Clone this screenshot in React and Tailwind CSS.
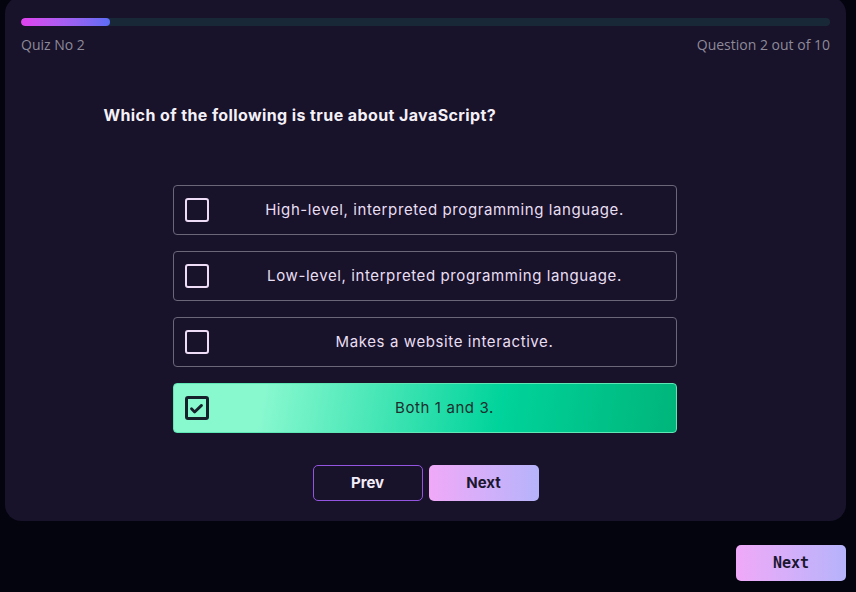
import React, { useState } from "react";

const OPTIONS = [
  "High-level, interpreted programming language.",
  "Low-level, interpreted programming language.",
  "Makes a website interactive.",
  "Both 1 and 3.",
];

const Checkbox = ({ checked }) => (
  <span
    className={
      checked
        ? "w-6 h-6 shrink-0 rounded-[3px] border-[3px] border-[#16202a] flex items-center justify-center"
        : "w-6 h-6 shrink-0 rounded-[3px] border-2 border-[#eedcf7]"
    }
  >
    {checked && (
      <svg width="15" height="15" viewBox="0 0 24 24" fill="none" stroke="#16202a" strokeWidth="4.5" strokeLinecap="round" strokeLinejoin="round">
        <path d="M4 12.5l5 5L20 7" />
      </svg>
    )}
  </span>
);

export default function App() {
  const [selected, setSelected] = useState(3);

  return (
    <div className="min-h-[592px] w-full bg-[#04040f] flex flex-col pl-[5px] pr-[10px] pb-3 font-['Inter',sans-serif]">
      {/* Quiz card */}
      <div className="-mt-[3px] bg-[#18122a] rounded-2xl px-4 pt-[21px] pb-5">
        <div className="h-2 w-full rounded-full bg-[#192837] overflow-hidden">
          <div className="h-full w-[11%] rounded-full bg-gradient-to-r from-[#e040ef] to-[#5b6cf5]" />
        </div>
        <div className="mt-[8px] flex justify-between text-[14px] text-[#8d8a99] font-['Open_Sans',sans-serif]">
          <span>Quiz No 2</span>
          <span>Question 2 out of 10</span>
        </div>

        <div className="w-[644px] mx-auto mt-[48px]">
          <h2 className="text-[16px] font-bold text-[#f4f0f8] tracking-[0.4px]">
            Which of the following is true about JavaScript?
          </h2>
        </div>

        <div className="w-[504px] -translate-x-[1px] mx-auto mt-[58px] flex flex-col gap-4">
          {OPTIONS.map((opt, i) => {
            const isSel = selected === i;
            return (
              <button
                key={opt}
                onClick={() => setSelected(i)}
                className={
                  isSel
                    ? "h-[50px] w-full rounded-[4px] border border-[#5fe7b6] bg-[linear-gradient(100deg,#88f8cf_18%,#00d39b_65%,#00b57a_100%)] flex items-center px-[11px] text-[15px] tracking-[0.6px] text-[#1d2e2e]"
                    : "h-[50px] w-full rounded-[4px] border border-[#6b6779] flex items-center px-[11px] text-[15px] tracking-[0.6px] text-[#e9dff2]"
                }
              >
                <Checkbox checked={isSel} />
                <span className="flex-1 text-center pl-4">{opt}</span>
              </button>
            );
          })}
        </div>

        <div className="mt-8 flex justify-center gap-[6px]">
          <button className="w-[110px] h-[36px] rounded-[5px] border border-[#9455e0] text-[#f3ecfa] text-[15px] font-bold">
            Prev
          </button>
          <button className="w-[110px] h-[36px] rounded-[5px] bg-gradient-to-r from-[#f0a9f8] to-[#b5b3fb] text-[#1c1730] text-[15px] font-bold">
            Next
          </button>
        </div>
      </div>

      <div className="flex justify-end mt-[24px]">
        <button className="w-[110px] h-[36px] rounded-[5px] bg-gradient-to-r from-[#f0a9f8] to-[#b5b3fb] text-[#1c1730] text-[15px] font-bold font-['DejaVu_Sans_Mono',monospace]">
          Next
        </button>
      </div>
    </div>
  );
}
